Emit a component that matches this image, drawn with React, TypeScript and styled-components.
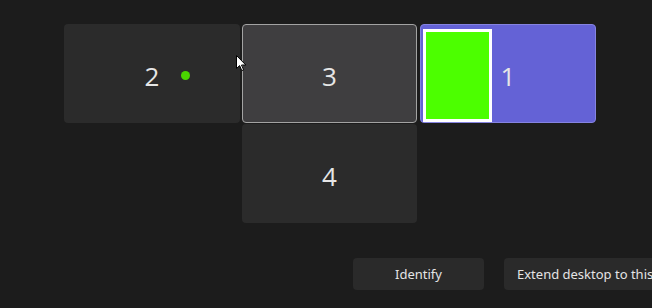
import React from "react";
import styled, { createGlobalStyle } from "styled-components";

const GlobalStyle = createGlobalStyle`
  html, body {
    margin: 0;
    padding: 0;
    background: #1c1c1c;
    overflow: hidden;
  }
  body {
    font-family: "Noto Sans", "Open Sans", sans-serif;
  }
`;

const Page = styled.div`
  width: 652px;
  height: 308px;
  background: #1c1c1c;
  position: relative;
  overflow: hidden;
`;

const Layout = styled.div`
  display: grid;
  grid-template-columns: 176px 175px 177px;
  grid-template-rows: 99px 99px;
  column-gap: 2px;
  row-gap: 1px;
  padding: 24px 0 0 64px;
`;

type Variant = "idle" | "selected" | "primary";

const Monitor = styled.div<{ $variant?: Variant; $col: number; $row: number }>`
  position: relative;
  grid-column: ${(p) => p.$col};
  grid-row: ${(p) => p.$row};
  box-sizing: border-box;
  border-radius: 4px;
  display: flex;
  align-items: center;
  justify-content: center;
  color: #e6e6e6;
  font-family: "Open Sans", "Noto Sans", sans-serif;
  font-weight: 400;
  font-size: 26px;
  background: ${(p) =>
    p.$variant === "selected"
      ? "#3f3e40"
      : p.$variant === "primary"
      ? "#6462d6"
      : "#2b2b2b"};
  border: ${(p) =>
    p.$variant === "selected"
      ? "1px solid #a3a3a3"
      : p.$variant === "primary"
      ? "1px solid #8583e0"
      : "1px solid transparent"};
  margin-left: ${(p) => (p.$variant === "primary" ? "1px" : "0")};
`;

const Label = styled.span`
  position: relative;
  line-height: 1;
  padding-top: 4px;
`;

const StatusDot = styled.span`
  position: absolute;
  left: 36px;
  top: 50%;
  width: 9px;
  height: 9px;
  margin-top: -3px;
  border-radius: 50%;
  background: #4ad400;
`;

const Preview = styled.div`
  position: absolute;
  left: 2px;
  top: 4px;
  width: 69px;
  height: 93px;
  box-sizing: border-box;
  border: 3px solid #ffffff;
  background: #4cff00;
`;

const Actions = styled.div`
  position: absolute;
  left: 353px;
  top: 258px;
  display: flex;
  gap: 20px;
`;

const ActionButton = styled.button<{ $wide?: boolean }>`
  height: 32px;
  min-width: ${(p) => (p.$wide ? "190px" : "131px")};
  padding: 0 13px;
  border: none;
  border-radius: 4px;
  background: #2a2a2a;
  color: #e4e4e4;
  font-family: "Noto Sans", "Open Sans", sans-serif;
  font-size: 13px;
  white-space: nowrap;
  text-align: ${(p) => (p.$wide ? "left" : "center")};
  cursor: default;
`;

const Cursor = styled.svg`
  position: absolute;
  left: 236px;
  top: 55px;
`;

export default function App() {
  return (
    <Page>
      <GlobalStyle />
      <Layout>
        <Monitor $col={1} $row={1}>
          <Label>
            2
            <StatusDot />
          </Label>
        </Monitor>
        <Monitor $col={2} $row={1} $variant="selected">
          <Label>3</Label>
        </Monitor>
        <Monitor $col={3} $row={1} $variant="primary">
          <Preview />
          <Label>1</Label>
        </Monitor>
        <Monitor $col={2} $row={2}>
          <Label>4</Label>
        </Monitor>
      </Layout>
      <Actions>
        <ActionButton>Identify</ActionButton>
        <ActionButton $wide>Extend desktop to this display</ActionButton>
      </Actions>
      <Cursor width="11" height="17" viewBox="0 0 11 17">
        <path
          d="M0.5 0.5 L0.5 13.5 L3.6 10.6 L5.8 15.6 L7.6 14.8 L5.5 10 L9.8 10 Z"
          fill="#ffffff"
          stroke="#000000"
          strokeWidth="1"
          strokeLinejoin="round"
        />
      </Cursor>
    </Page>
  );
}
